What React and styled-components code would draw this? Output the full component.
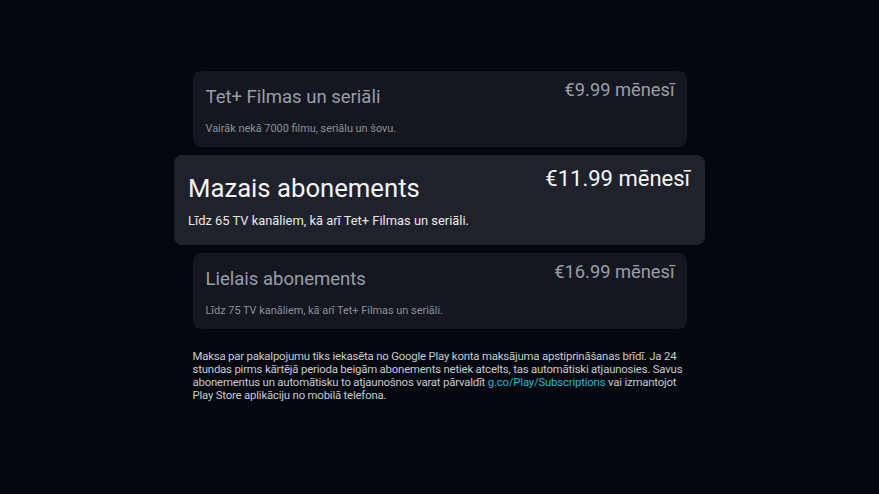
import React from "react";
import styled, { createGlobalStyle, css } from "styled-components";

const GlobalStyle = createGlobalStyle`
  html, body {
    margin: 0;
    padding: 0;
    background: #05070e;
  }
  body {
    font-family: Roboto, "Noto Sans", "Liberation Sans", sans-serif;
    -webkit-font-smoothing: antialiased;
  }
`;

const plans = [
  {
    title: "Tet+ Filmas un seriāli",
    price: "€9.99 mēnesī",
    text: "Vairāk nekā 7000 filmu, seriālu un šovu.",
  },
  {
    title: "Mazais abonements",
    price: "€11.99 mēnesī",
    text: "Līdz 65 TV kanāliem, kā arī Tet+ Filmas un seriāli.",
    focused: true,
  },
  {
    title: "Lielais abonements",
    price: "€16.99 mēnesī",
    text: "Līdz 75 TV kanāliem, kā arī Tet+ Filmas un seriāli.",
  },
];

const App = () => {
  return (
    <Page>
      <GlobalStyle />
      <Column>
        <CardList>
          {plans.map((p) => (
            <Card key={p.title} $focused={p.focused}>
              <Header>
                <Title $focused={p.focused}>{p.title}</Title>
                <Price $focused={p.focused}>{p.price}</Price>
              </Header>
              <Desc $focused={p.focused}>{p.text}</Desc>
            </Card>
          ))}
        </CardList>
        <Notice>
          Maksa par pakalpojumu tiks iekasēta no Google Play konta maksājuma
          apstiprināšanas brīdī. Ja 24 stundas pirms kārtējā perioda beigām
          abonements netiek atcelts, tas automātiski atjaunosies. Savus
          abonementus un automātisku to atjaunošnos varat pārvaldīt{" "}
          <Link>g.co/Play/Subscriptions</Link> vai izmantojot Play Store
          aplikāciju no mobilā telefona.
        </Notice>
      </Column>
    </Page>
  );
};

export default App;

const Page = styled.div`
  width: 879px;
  height: 494px;
  background: #05070e;
  display: flex;
  justify-content: center;
  padding-top: 71px;
  box-sizing: border-box;
  overflow: hidden;
`;

const Column = styled.div`
  width: 494px;
  display: flex;
  flex-direction: column;
`;

const CardList = styled.div`
  display: flex;
  flex-direction: column;
  align-items: center;
  gap: 8px;
`;

const Card = styled.div`
  width: 494px;
  box-sizing: border-box;
  background: #14171f;
  border-radius: 8px;
  padding: 9px 12px 11px 13px;
  display: flex;
  flex-direction: column;

  ${(p) =>
    p.$focused &&
    css`
      width: 531px;
      flex-shrink: 0;
      background: #1f222b;
      padding: 12px 15px 16px 14px;
    `}
`;

const Header = styled.div`
  display: flex;
  justify-content: space-between;
  align-items: flex-start;
`;

const Title = styled.div`
  margin-top: 5px;
  font-size: 18.5px;
  line-height: 24px;
  color: #9a9ea6;

  ${(p) =>
    p.$focused &&
    css`
      font-size: 25.7px;
      line-height: 32px;
      color: #f4f5f7;
    `}
`;

const Price = styled.div`
  font-size: 18.3px;
  line-height: 20px;
  color: #9a9ea6;
  white-space: nowrap;

  ${(p) =>
    p.$focused &&
    css`
      font-size: 22px;
      line-height: 24px;
      color: #f4f5f7;
    `}
`;

const Desc = styled.div`
  margin-top: 13px;
  font-size: 10.9px;
  line-height: 14px;
  color: #8c9097;

  ${(p) =>
    p.$focused &&
    css`
      margin-top: 9px;
      font-size: 12.9px;
      line-height: 16px;
      color: #e8e9ec;
    `}
`;

const Notice = styled.p`
  margin: 21px 0 0;
  font-size: 11.4px;
  line-height: 13px;
  letter-spacing: -0.2px;
  color: #c8cacf;
`;

const Link = styled.span`
  color: #1fb8d3;
`;
